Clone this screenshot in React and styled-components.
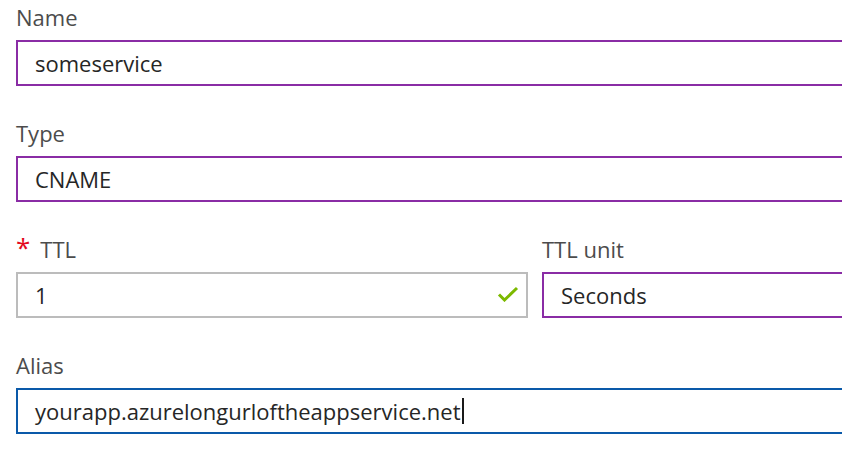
import React from 'react';
import styled, { createGlobalStyle } from 'styled-components';

const GlobalStyle = createGlobalStyle`
  html, body {
    margin: 0;
    padding: 0;
    background: #ffffff;
    overflow: hidden;
  }
  body {
    font-family: "Open Sans", "Noto Sans", sans-serif;
  }
`;

const borderColors = {
  purple: '#8a2ca5',
  grey: '#bcbcbc',
  blue: '#0a59a9',
};

const App = () => {
  return (
    <>
      <GlobalStyle />
      <Form>
        <Field>
          <Label>Name</Label>
          <InputBox $tone="purple">someservice</InputBox>
        </Field>

        <Field>
          <Label>Type</Label>
          <InputBox $tone="purple">CNAME</InputBox>
        </Field>

        <Row>
          <Field>
            <Label>
              <Required>*</Required>TTL
            </Label>
            <InputBox $tone="grey">
              1
              <CheckMark viewBox="0 0 22 16">
                <path d="M2 8.5 L7.5 14 L20 2" fill="none" stroke="#7cb900" strokeWidth="3" />
              </CheckMark>
            </InputBox>
          </Field>
          <Field>
            <Label>TTL unit</Label>
            <InputBox $tone="purple">Seconds</InputBox>
          </Field>
        </Row>

        <Field>
          <Label>Alias</Label>
          <InputBox $tone="blue">
            yourapp.azurelongurloftheappservice.net
            <Caret />
          </InputBox>
        </Field>
      </Form>
    </>
  );
};

const Form = styled.div`
  width: 850px;
  padding-left: 16px;
  display: flex;
  flex-direction: column;
`;

const Row = styled.div`
  display: grid;
  grid-template-columns: 512px 1fr;
  column-gap: 14px;
`;

const Field = styled.div`
  display: flex;
  flex-direction: column;
  margin-bottom: 30px;
`;

const Label = styled.div`
  height: 34px;
  line-height: 34px;
  margin-bottom: 6px;
  font-size: 22px;
  color: #4c4c4c;
  display: flex;
  align-items: center;
  white-space: nowrap;
`;

const Required = styled.span`
  color: #e3081d;
  font-size: 26px;
  margin-right: 10px;
  position: relative;
  top: -2px;
`;

const InputBox = styled.div`
  box-sizing: border-box;
  height: 46px;
  border: 2px solid ${p => borderColors[p.$tone]};
  padding: 0 17px;
  display: flex;
  align-items: center;
  font-size: 22px;
  color: #262626;
  white-space: nowrap;
  position: relative;
`;

const CheckMark = styled.svg`
  position: absolute;
  right: 7px;
  top: 12px;
  width: 22px;
  height: 16px;
`;

const Caret = styled.span`
  display: inline-block;
  width: 2px;
  height: 26px;
  background: #1a1a1a;
  margin-left: 1px;
`;

export default App;
